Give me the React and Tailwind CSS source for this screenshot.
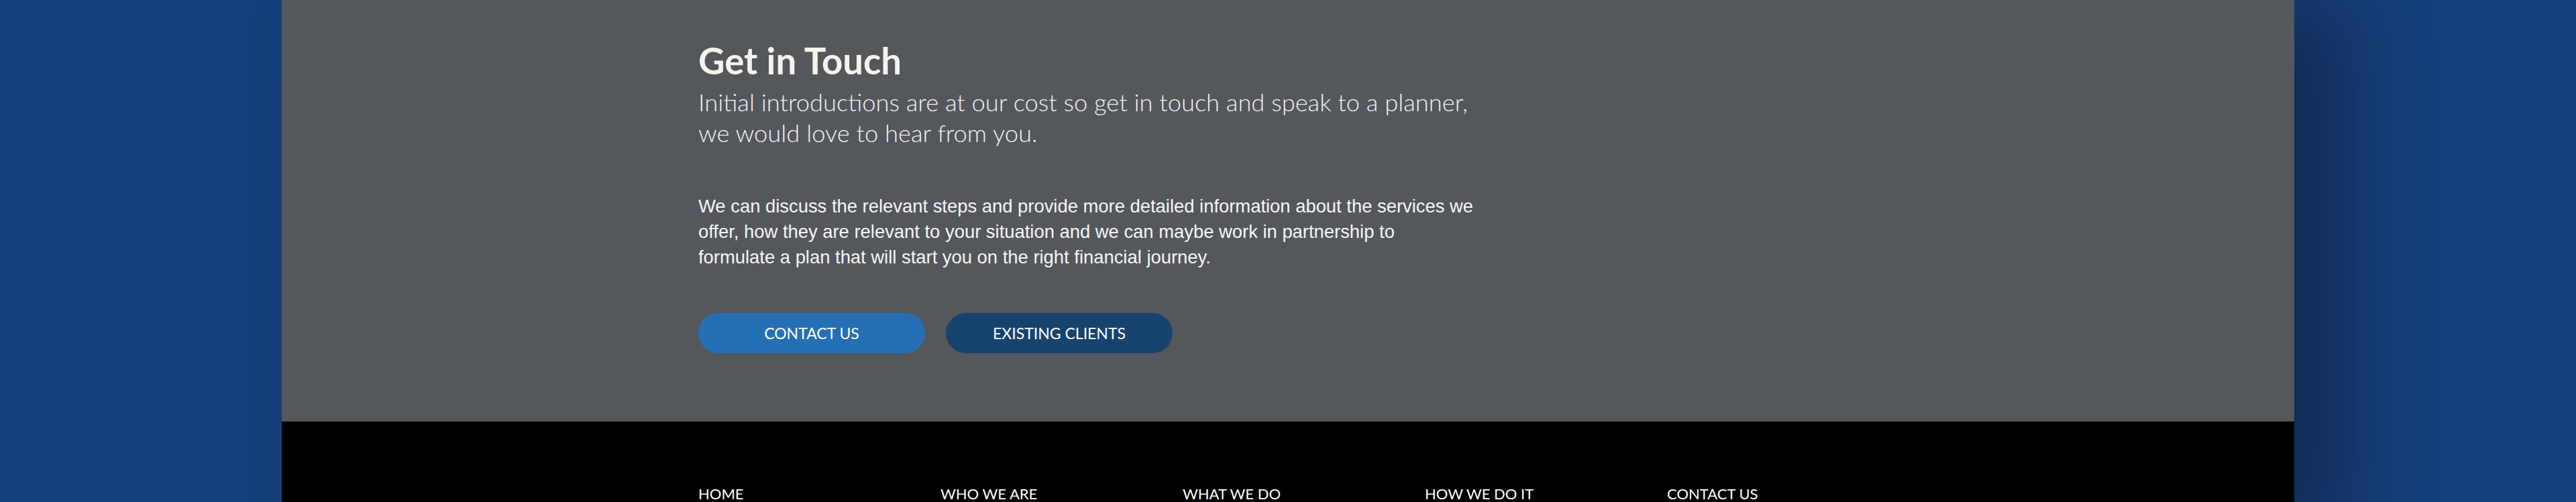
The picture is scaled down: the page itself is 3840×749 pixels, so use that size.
import React from "react";

const navItems = ["HOME", "WHO WE ARE", "WHAT WE DO", "HOW WE DO IT", "CONTACT US"];

function App() {
  return (
    <div className="min-h-screen overflow-hidden bg-[#173f7b] font-['Lato',sans-serif]">
      <div className="mx-auto w-[3000px] shadow-[80px_0_120px_rgba(0,0,0,0.3)]">
        {/* Get in touch */}
        <section className="h-[629px] bg-[#54575c] pt-[60px]">
          <div className="mx-auto w-[1758px]">
            <h2 className="text-[54.5px] leading-[60px] font-bold text-[#f4f3ef]">Get in Touch</h2>
            <p className="mt-[9px] text-[36.3px] leading-[46px] font-light text-[#f2f3f5] whitespace-nowrap">
              Initial introductions are at our cost so get in touch and speak to a planner,
              <br />
              we would love to hear from you.
            </p>
            <p className="mt-[68px] font-['Liberation_Sans',Arial,sans-serif] text-[27.4px] leading-[38px] text-[#f6f6f6] whitespace-nowrap">
              We can discuss the relevant steps and provide more detailed information about the services we
              <br />
              offer, how they are relevant to your situation and we can maybe work in partnership to
              <br />
              formulate a plan that will start you on the right financial journey.
            </p>
            <div className="mt-[64px] flex gap-[31px]">
              <a href="#" className="flex h-[60px] w-[338px] items-center justify-center rounded-full bg-[#2570b5] text-[23px] text-white">
                CONTACT US
              </a>
              <a href="#" className="flex h-[60px] w-[338px] items-center justify-center rounded-full bg-[#17446f] text-[23px] text-white">
                EXISTING CLIENTS
              </a>
            </div>
          </div>
        </section>

        {/* Footer */}
        <footer className="bg-black pt-[95px] pb-[60px]">
          <nav className="mx-auto flex w-[1758px]">
            {navItems.map((item) => (
              <a key={item} href="#" className="w-[361px] shrink-0 text-[22px] leading-[26px] text-white">
                {item}
              </a>
            ))}
          </nav>
        </footer>
      </div>
    </div>
  );
}

export default App;
